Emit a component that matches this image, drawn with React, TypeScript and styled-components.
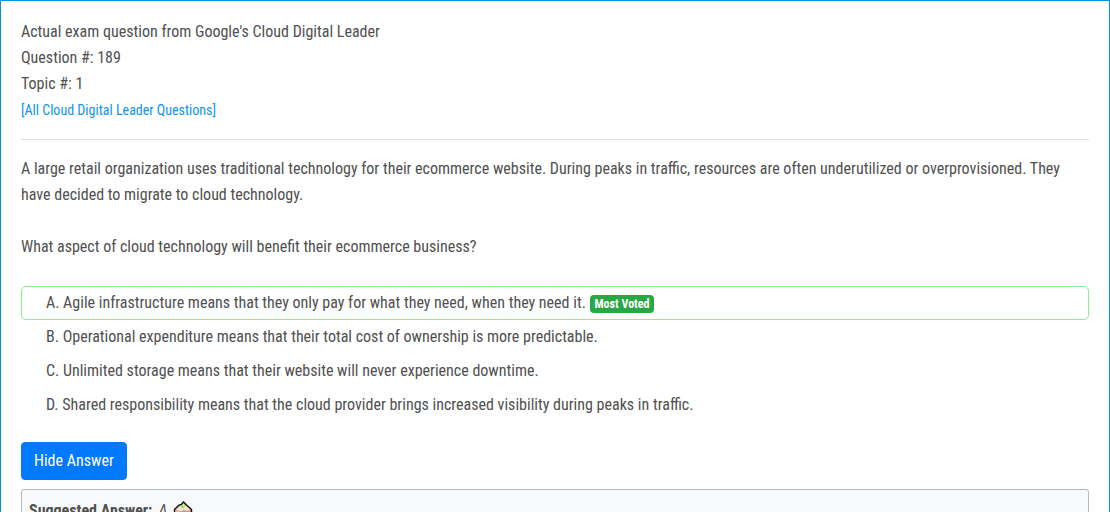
import React from "react";
import styled, { createGlobalStyle, css } from "styled-components";

const Global = createGlobalStyle`
  *, *::before, *::after { box-sizing: border-box; }
  body {
    margin: 0;
    background: #fff;
    color: #505050;
    font-family: "Roboto Condensed", "Roboto", sans-serif;
    font-size: 16px;
    line-height: 26px;
  }
`;

const Page = styled.main`
  height: 100vh;
  overflow: hidden;
  padding: 18px 20px 0;
  border: 1px solid #0491e4;
  border-bottom: 0;
`;

const Header = styled.header`
  padding-bottom: 16px;
  border-bottom: 1px solid #dfdfdf;
`;

const Line = styled.div``;

const AllLink = styled.a`
  color: #0d95e8;
  font-size: 14px;
  text-decoration: none;
`;

const Question = styled.p`
  margin: 16px 0 26px;
`;

const Choices = styled.ul`
  margin: 0 0 20px;
  padding: 0;
  list-style: none;
`;

const Choice = styled.li<{ $voted?: boolean }>`
  padding: 3px 24px;
  border: 1px solid transparent;
  border-radius: 5px;
  ${(p) => p.$voted && css`border-color: #90ee90;`}
`;

const Badge = styled.span`
  display: inline-block;
  padding: 3px 5px;
  border-radius: 4px;
  background: #28a745;
  color: #fff;
  font-size: 12px;
  font-weight: 700;
  line-height: 12px;
  vertical-align: baseline;
`;

const HideButton = styled.button`
  display: block;
  padding: 5px 12px;
  border: 1px solid #0079fb;
  border-radius: 4px;
  background: #0079fb;
  color: #fff;
  font: inherit;
  cursor: pointer;
`;

const Answer = styled.section`
  display: flex;
  align-items: center;
  gap: 6px;
  margin-top: 9px;
  padding: 8px 7px;
  border: 1px solid #b4b7ba;
  border-radius: 3px;
  background: #f8f9fa;
`;

const Cake = () => (
  <svg width="20" height="20" viewBox="0 0 20 20" aria-hidden="true">
    <path d="M1.5 8.5 L6 4 L8.5 3.3 L10.5 1 L13 3.6 L18.5 8.5 V16 L10 19 L1.5 16 Z" fill="#c99a78" stroke="#111" strokeWidth="1.4" />
    <path d="M2.5 9 L7 4.8 L13 4.8 L17.5 9 L14 10 L11 9 L8 10.5 L5 9.5 Z" fill="#f0e2d2" />
    <path d="M2.5 9.5 L5 10 L8 11 V17.5 L2.5 15.5 Z" fill="#e3bd9e" />
    <path d="M7.5 5.5 L10.5 2.2 L13 5 L11 5.6 L10.5 7.5 L9 6.6 Z" fill="#8de05a" />
    <path d="M10.4 3 L10.8 5" stroke="#e7f7c4" strokeWidth="1" />
  </svg>
);

const choices = [
  { text: "A. Agile infrastructure means that they only pay for what they need, when they need it.", voted: true },
  { text: "B. Operational expenditure means that their total cost of ownership is more predictable." },
  { text: "C. Unlimited storage means that their website will never experience downtime." },
  { text: "D. Shared responsibility means that the cloud provider brings increased visibility during peaks in traffic." },
];

export default function App() {
  return (
    <>
      <Global />
      <Page>
        <Header>
          <Line>Actual exam question from Google's Cloud Digital Leader</Line>
          <Line>Question #: 189</Line>
          <Line>Topic #: 1</Line>
          <Line><AllLink href="#all">[All Cloud Digital Leader Questions]</AllLink></Line>
        </Header>
        <Question>
          A large retail organization uses traditional technology for their ecommerce website. During peaks in traffic, resources are often underutilized or overprovisioned. They have decided to migrate to cloud technology.
          <br /><br />
          What aspect of cloud technology will benefit their ecommerce business?
        </Question>
        <Choices>
          {choices.map((c) => (
            <Choice key={c.text} $voted={c.voted}>
              {c.text} {c.voted && <Badge>Most Voted</Badge>}
            </Choice>
          ))}
        </Choices>
        <HideButton type="button">Hide Answer</HideButton>
        <Answer>
          <strong>Suggested Answer:</strong>
          <em>A</em>
          <Cake />
        </Answer>
      </Page>
    </>
  );
}
